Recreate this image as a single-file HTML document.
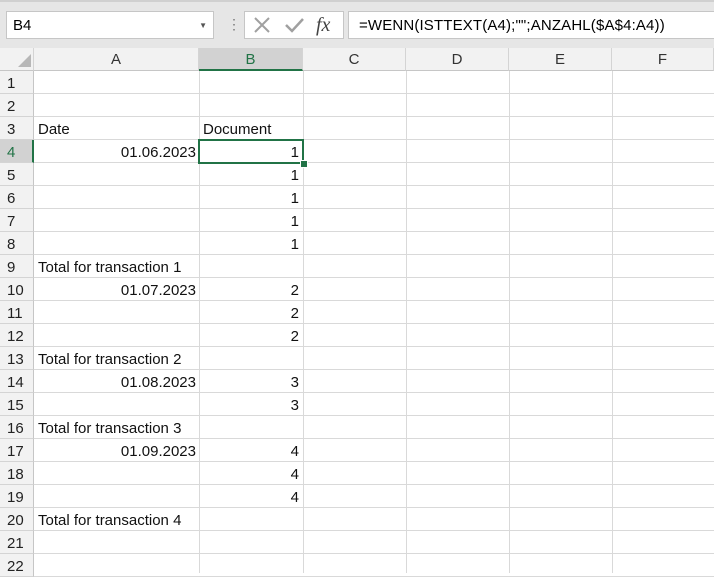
<!DOCTYPE html>
<html><head><style>
body{margin:0;width:714px;height:573px;overflow:hidden;background:#fff;font-family:"Liberation Sans",Arial,sans-serif;position:relative}
.a{position:absolute}
.top{left:0;top:0;width:714px;height:48px;background:#e6e6e6;border-top:2px solid #d0d0d0;box-sizing:border-box}
.box{background:#fff;border:1px solid #c6c6c6;box-sizing:border-box}
.ch{top:48px;height:23px;background:#f2f2f2;border-right:1px solid #d4d4d4;border-bottom:1px solid #c6c6c6;box-sizing:border-box;text-align:center;font-size:15px;line-height:24px;color:#333}
.rh{left:0;width:34px;background:#f2f2f2;border-bottom:1px solid #d4d4d4;border-right:1px solid #c6c6c6;box-sizing:border-box;font-size:15px;line-height:25px;color:#222;padding-left:7px;height:23px}
.vl{top:71px;width:1px;height:502px;background:#d9d9d9}
.hl{left:34px;width:680px;height:1px;background:#d9d9d9}
.t{font-size:15px;line-height:25px;color:#111;white-space:nowrap}
</style></head><body>
<div class="a top"></div>
<div class="a box" style="left:6px;top:11px;width:208px;height:28px;font-size:15px;line-height:28px;padding-left:6px">B4<span style="position:absolute;right:6px;top:0;font-size:8px;color:#555">▼</span></div>
<div class="a" style="left:227px;top:15px;color:#777;font-size:14px;line-height:18px">⋮</div>
<div class="a box" style="left:244px;top:11px;width:100px;height:28px"></div>
<svg class="a" style="left:250px;top:15px" width="90" height="22"><path d="M5 3L19 17M19 3L5 17" stroke="#a0a0a0" stroke-width="2" fill="none"/><path d="M36 10L42 16L53 4" stroke="#a0a0a0" stroke-width="2.5" fill="none"/><text x="66" y="16" font-family="Liberation Serif" font-style="italic" font-size="20" fill="#444">fx</text></svg>
<div class="a box" style="left:348px;top:11px;width:370px;height:28px;font-size:15px;line-height:28px;padding-left:10px;letter-spacing:0.15px">=WENN(ISTTEXT(A4);"";ANZAHL($A$4:A4))</div>

<div class="a ch" style="left:0;width:34px"></div>
<svg class="a" style="left:18px;top:54px" width="14" height="14"><path d="M13 0V13H0Z" fill="#b7b7b7"/></svg>
<div class="a ch" style="left:34px;width:165px">A</div>
<div class="a ch" style="left:199px;width:104px;background:#d2d2d2;color:#217346;border-bottom:2px solid #217346">B</div>
<div class="a ch" style="left:303px;width:103px">C</div>
<div class="a ch" style="left:406px;width:103px">D</div>
<div class="a ch" style="left:509px;width:103px">E</div>
<div class="a ch" style="left:612px;width:102px">F</div>

<div class="a vl" style="left:199px"></div><div class="a vl" style="left:303px"></div><div class="a vl" style="left:406px"></div><div class="a vl" style="left:509px"></div><div class="a vl" style="left:612px"></div>

<div id="rows"></div>
<script>
var h='';for(var i=1;i<=22;i++){var y=71+(i-1)*23;var sel=i==4;
h+='<div class="a rh" style="top:'+y+'px;'+(sel?'background:#d2d2d2;color:#217346;border-right:2px solid #217346;':'')+'">'+i+'</div>';
h+='<div class="a hl" style="top:'+(y+22)+'px"></div>';}
document.getElementById('rows').innerHTML=h;
</script>

<div class="a t" style="left:38px;top:117px">Date</div>
<div class="a t" style="left:203px;top:117px">Document</div>
<div class="a t" style="left:38px;top:255px">Total for transaction 1</div>
<div class="a t" style="left:38px;top:347px">Total for transaction 2</div>
<div class="a t" style="left:38px;top:416px">Total for transaction 3</div>
<div class="a t" style="left:38px;top:508px">Total for transaction 4</div>
<div class="a t" style="right:518px;top:140px">01.06.2023</div>
<div class="a t" style="right:518px;top:278px">01.07.2023</div>
<div class="a t" style="right:518px;top:370px">01.08.2023</div>
<div class="a t" style="right:518px;top:439px">01.09.2023</div>
<div class="a t" style="right:415px;top:140px">1</div>
<div class="a t" style="right:415px;top:163px">1</div>
<div class="a t" style="right:415px;top:186px">1</div>
<div class="a t" style="right:415px;top:209px">1</div>
<div class="a t" style="right:415px;top:232px">1</div>
<div class="a t" style="right:415px;top:278px">2</div>
<div class="a t" style="right:415px;top:301px">2</div>
<div class="a t" style="right:415px;top:324px">2</div>
<div class="a t" style="right:415px;top:370px">3</div>
<div class="a t" style="right:415px;top:393px">3</div>
<div class="a t" style="right:415px;top:439px">4</div>
<div class="a t" style="right:415px;top:462px">4</div>
<div class="a t" style="right:415px;top:485px">4</div>

<div class="a" style="left:198px;top:139px;width:106px;height:25px;border:2px solid #217346;box-sizing:border-box"></div>
<div class="a" style="left:300px;top:160px;width:6px;height:6px;background:#217346;border:1px solid #fff"></div>
</body></html>
